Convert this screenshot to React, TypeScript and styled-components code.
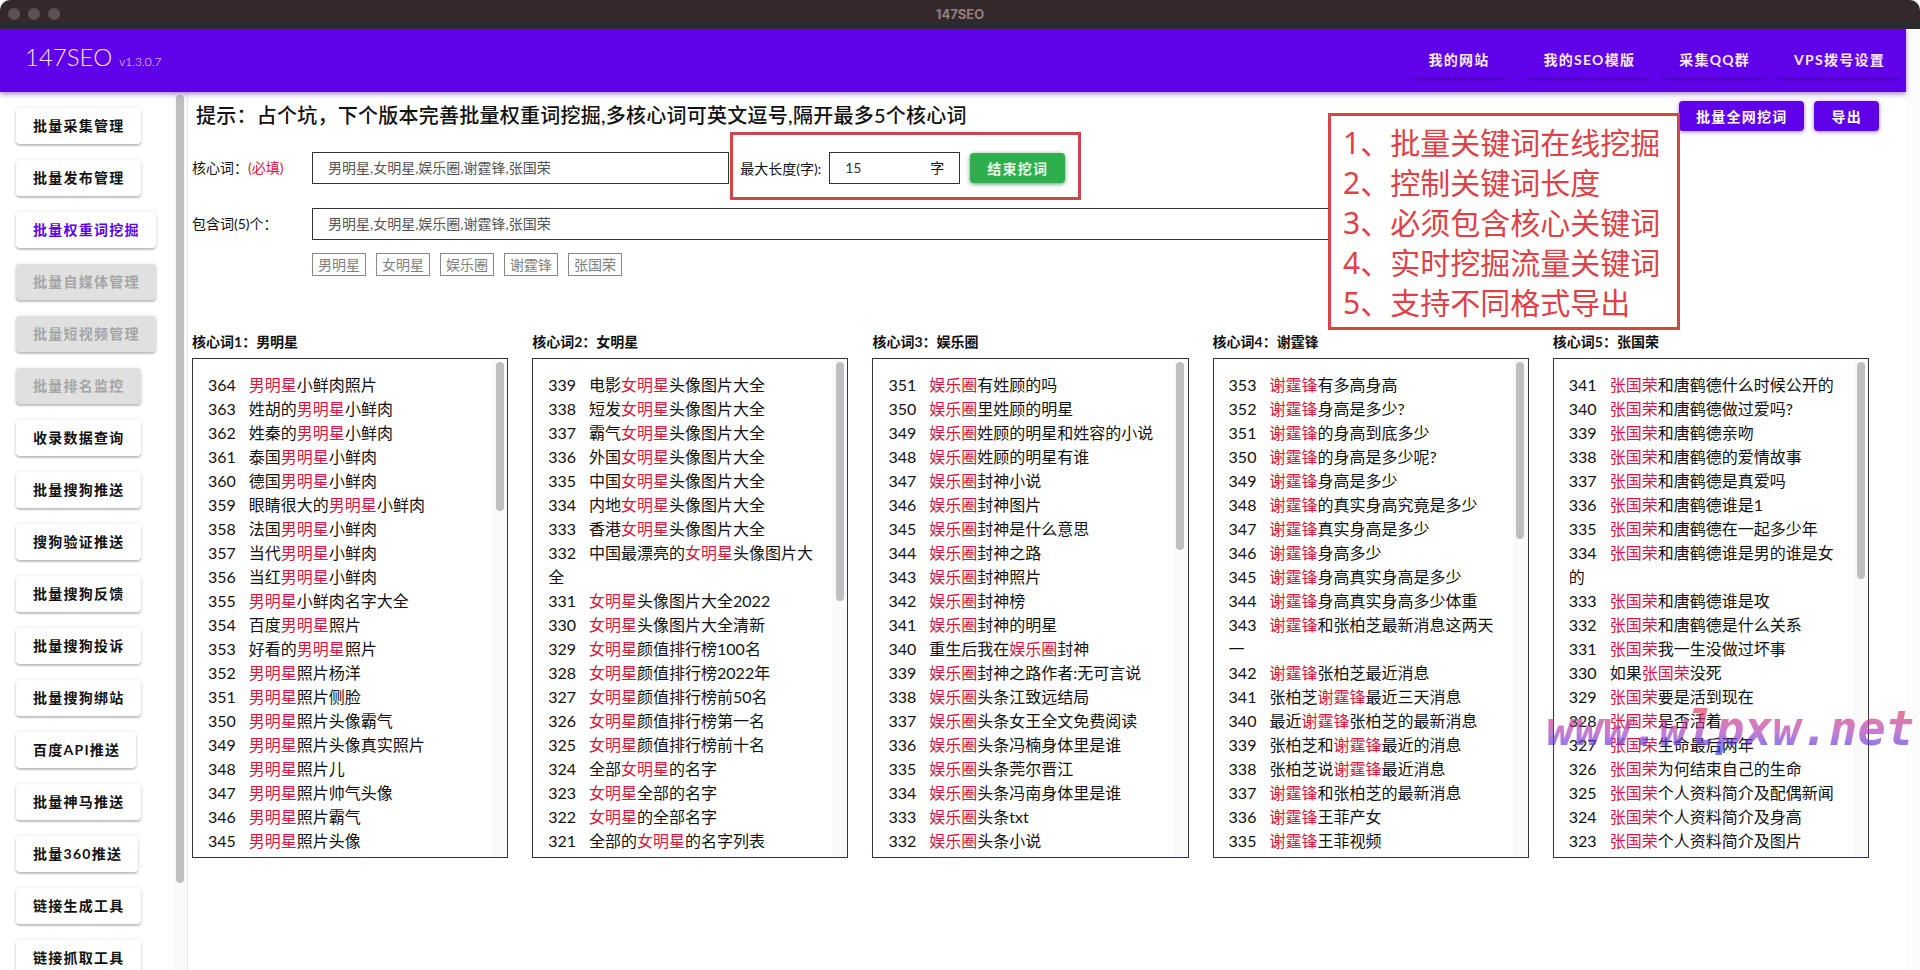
import React from "react";
import styled, { createGlobalStyle, css } from "styled-components";

const sans = `Lato, "Noto Sans CJK SC", sans-serif`;
const purple = "#6002e9";

const GlobalStyle = createGlobalStyle`
  *, *::before, *::after { box-sizing: border-box; }
  body { margin: 0; background: #fff; color: #111; font-family: ${sans}; }
  button, input { font-family: inherit; }
`;

const Window = styled.div`
  position: relative;
  display: flex;
  flex-direction: column;
  height: 100vh;
  overflow: hidden;
`;

const TitleBar = styled.div`
  display: grid;
  grid-template-columns: 1fr auto 1fr;
  align-items: center;
  flex: none;
  height: 29px;
  padding: 0 8px 2px;
  border-radius: 10px 10px 0 0;
  background: linear-gradient(#34282b 0 62%, #2a2b2f 80% 100%);
  color: #8d8080;
  font: bold 13px/16px Inter, sans-serif;
`;

const Lights = styled.div`
  display: flex;
  gap: 8px;
`;

const Light = styled.span`
  width: 12px;
  height: 12px;
  border-radius: 50%;
  background: #5b5150;
`;

const Page = styled.div`
  display: flex;
  flex-direction: column;
  flex: 1;
  min-height: 0;
  margin-right: 14px;
`;

const Gutter = styled.div`
  position: absolute;
  top: 29px;
  right: 0;
  bottom: 0;
  width: 14px;
  background: #fcfcfc;
`;

const Header = styled.header`
  display: flex;
  align-items: center;
  justify-content: space-between;
  flex: none;
  height: 63px;
  padding: 0 4px 2px 25px;
  background: ${purple};
  box-shadow: 0 2px 5px rgba(70, 20, 160, 0.5);
  z-index: 1;
`;

const Brand = styled.h1`
  display: flex;
  align-items: baseline;
  gap: 7px;
  margin: 0;
  color: #ffe0ff;
  font-size: 24px;
  line-height: 32px;
  font-weight: 300;
`;

const Version = styled.small`
  font-size: 12px;
`;

const Nav = styled.nav`
  display: flex;
  gap: 10px;
`;

const NavLink = styled.a<{ $spaced?: boolean }>`
  height: 36px;
  padding: 0 17px;
  margin-right: ${(p) => (p.$spaced ? 10 : 0)}px;
  border-radius: 4px;
  color: #fbe9fb;
  font-size: 14px;
  line-height: 36px;
  font-weight: 700;
  letter-spacing: 0.09em;
  text-decoration: none;
  box-shadow: 0 3px 3px -2px rgba(0, 0, 0, 0.35);
`;

const Body = styled.div`
  display: flex;
  flex: 1;
  min-height: 0;
`;

const Sidebar = styled.aside`
  display: flex;
  flex: none;
  width: 188px;
  border-right: 1px solid #e6e6e6;
`;

const Menu = styled.div`
  display: flex;
  flex: 1;
  flex-direction: column;
  align-items: flex-start;
  gap: 16px;
  padding: 16px 0 0 16px;
  overflow: hidden;
`;

const buttonText = css`
  border: 0;
  border-radius: 4px;
  padding: 0 17px;
  font-size: 14px;
  font-weight: 700;
  letter-spacing: 0.09em;
  white-space: nowrap;
`;

const MenuButton = styled.button<{ $active?: boolean }>`
  ${buttonText}
  flex: none;
  height: 36px;
  padding: 0 16px 2px 17px;
  background: #fff;
  color: ${(p) => (p.$active ? purple : "#111")};
  box-shadow: 0 2px 2px rgba(0, 0, 0, 0.22), 0 0 4px rgba(0, 0, 0, 0.1);

  &:disabled {
    background: #e0e0e0;
    color: #a6a6a6;
  }
`;

const Track = styled.div<{ $width: number }>`
  display: flex;
  flex: none;
  flex-direction: column;
  align-items: center;
  width: ${(p) => p.$width}px;
  padding-top: 3px;
  background: #f9f9f9;
`;

const Thumb = styled.div`
  width: 8px;
  border-radius: 4px;
  background: #bfbfbf;
`;

const Main = styled.main`
  flex: 1;
  min-width: 0;
  padding: 9px 37px 0 4px;
`;

const TopRow = styled.div`
  display: flex;
  align-items: flex-start;
  justify-content: space-between;
  height: 51px;
  margin-right: -10px;
`;

const Hint = styled.h2`
  margin: 0 0 0 4px;
  font-size: 20px;
  line-height: 28px;
  font-weight: 500;
  letter-spacing: 0.0125em;
`;

const Actions = styled.div`
  display: flex;
  gap: 10px;
`;

const ActionButton = styled.button<{ $green?: boolean }>`
  ${buttonText}
  height: 30px;
  background: ${(p) => (p.$green ? "#2fae4e" : purple)};
  color: ${(p) => (p.$green ? "#e9ffe9" : "#fff")};
  box-shadow: 0 1px 4px ${(p) => (p.$green ? "rgba(20, 110, 40, 0.7)" : "rgba(70, 0, 180, 0.5)")};
`;

const FieldRow = styled.div`
  display: flex;
  align-items: center;
  height: 32px;
  margin-bottom: 24px;
  font-size: 14px;
`;

const Label = styled.label`
  flex: none;
  width: 120px;
  padding-bottom: 2px;
`;

const Required = styled.span`
  color: #dc1440;
`;

const TextInput = styled.input<{ $width: string }>`
  width: ${(p) => p.$width};
  height: 32px;
  padding: 0 16px 2px 15px;
  border: 1px solid #333;
  background: #fff;
  color: #555;
  font-size: 14px;
`;

const LimitGroup = styled.div`
  position: relative;
  display: flex;
  align-items: center;
  flex: none;
  height: 32px;
  width: 351px;
  margin-left: 1px;
  padding-left: 10px;

  &::after {
    content: "";
    position: absolute;
    inset: -20px 0 -16px;
    border: 3px solid #d04548;
    pointer-events: none;
  }
`;

const LimitField = styled.div`
  display: flex;
  align-items: center;
  width: 131px;
  height: 32px;
  margin: 0 10px 0 8px;
  padding: 0 15px 2px;
  border: 1px solid #333;
`;

const NumberInput = styled.input`
  flex: 1;
  min-width: 0;
  padding: 0;
  border: 0;
  background: none;
  color: #333;
  font-size: 14px;
`;

const Tags = styled.div`
  display: flex;
  gap: 10px;
  margin: -11px 0 0 120px;
`;

const Tag = styled.span`
  padding: 0 5px;
  border: 1px solid #888;
  color: #808080;
  font-size: 14px;
  line-height: 21px;
`;

const Columns = styled.div`
  display: grid;
  grid-template-columns: repeat(5, minmax(0, 1fr));
  gap: 24px;
  margin-top: 56px;
`;

const ColumnTitle = styled.h3`
  margin: 0 0 6px;
  font-size: 14px;
  line-height: 20px;
  font-weight: 700;
`;

const ListBox = styled.div`
  display: flex;
  height: 500px;
  border: 1px solid #333344;
  overflow: hidden;
`;

const List = styled.ul`
  flex: 1;
  min-width: 0;
  margin: 0;
  padding: 14px 12px 0 15px;
  list-style: none;
  font-size: 16px;
  line-height: 24px;
`;

const Rank = styled.span`
  margin-right: 13px;
`;

const Key = styled.em`
  color: #dc1440;
  font-style: normal;
`;

const Note = styled.ol`
  position: absolute;
  top: 113px;
  right: 240px;
  width: 352px;
  margin: 0;
  padding: 7px 12px 4px;
  border: 3px solid #d84446;
  background: #fff;
  color: #df4146;
  font: 30px/40px "Noto Sans", "Noto Sans CJK SC", sans-serif;
  list-style: none;
  white-space: nowrap;
  z-index: 2;
`;

const Watermark = styled.div`
  position: absolute;
  right: 6px;
  top: 702px;
  background: linear-gradient(#f0304a 10%, #a838b8 55%, #3434f0 90%);
  background-clip: text;
  -webkit-background-clip: text;
  color: transparent;
  opacity: 0.65;
  font: italic bold 47px/54px "DejaVu Sans Mono", monospace;
  z-index: 2;
`;

const navItems = ["我的网站", "我的SEO模版", "采集QQ群", "VPS拨号设置"];

const menuItems: { text: string; active?: boolean; disabled?: boolean }[] = [
  { text: "批量采集管理" },
  { text: "批量发布管理" },
  { text: "批量权重词挖掘", active: true },
  { text: "批量自媒体管理", disabled: true },
  { text: "批量短视频管理", disabled: true },
  { text: "批量排名监控", disabled: true },
  { text: "收录数据查询" },
  { text: "批量搜狗推送" },
  { text: "搜狗验证推送" },
  { text: "批量搜狗反馈" },
  { text: "批量搜狗投诉" },
  { text: "批量搜狗绑站" },
  { text: "百度API推送" },
  { text: "批量神马推送" },
  { text: "批量360推送" },
  { text: "链接生成工具" },
  { text: "链接抓取工具" },
];

// In each phrase "*" stands for the column's core word.
const columns = [
  {
    word: "男明星",
    first: 364,
    thumb: 149,
    phrases: [
      "*小鲜肉照片", "姓胡的*小鲜肉", "姓秦的*小鲜肉", "泰国*小鲜肉", "德国*小鲜肉",
      "眼睛很大的*小鲜肉", "法国*小鲜肉", "当代*小鲜肉", "当红*小鲜肉", "*小鲜肉名字大全",
      "百度*照片", "好看的*照片", "*照片杨洋", "*照片侧脸", "*照片头像霸气",
      "*照片头像真实照片", "*照片儿", "*照片帅气头像", "*照片霸气", "*照片头像",
    ],
  },
  {
    word: "女明星",
    first: 339,
    thumb: 239,
    phrases: [
      "电影*头像图片大全", "短发*头像图片大全", "霸气*头像图片大全", "外国*头像图片大全",
      "中国*头像图片大全", "内地*头像图片大全", "香港*头像图片大全", "中国最漂亮的*头像图片大全",
      "*头像图片大全2022", "*头像图片大全清新", "*颜值排行榜100名", "*颜值排行榜2022年",
      "*颜值排行榜前50名", "*颜值排行榜第一名", "*颜值排行榜前十名", "全部*的名字",
      "*全部的名字", "*的全部名字", "全部的*的名字列表",
    ],
  },
  {
    word: "娱乐圈",
    first: 351,
    thumb: 188,
    phrases: [
      "*有姓顾的吗", "*里姓顾的明星", "*姓顾的明星和姓容的小说", "*姓顾的明星有谁",
      "*封神小说", "*封神图片", "*封神是什么意思", "*封神之路", "*封神照片", "*封神榜",
      "*封神的明星", "重生后我在*封神", "*封神之路作者:无可言说", "*头条江致远结局",
      "*头条女王全文免费阅读", "*头条冯楠身体里是谁", "*头条莞尔晋江", "*头条冯南身体里是谁",
      "*头条txt", "*头条小说",
    ],
  },
  {
    word: "谢霆锋",
    first: 353,
    thumb: 177,
    phrases: [
      "*有多高身高", "*身高是多少?", "*的身高到底多少", "*的身高是多少呢?", "*身高是多少",
      "*的真实身高究竟是多少", "*真实身高是多少", "*身高多少", "*身高真实身高是多少",
      "*身高真实身高多少体重", "*和张柏芝最新消息这两天一", "*张柏芝最近消息",
      "张柏芝*最近三天消息", "最近*张柏芝的最新消息", "张柏芝和*最近的消息",
      "张柏芝说*最近消息", "*和张柏芝的最新消息", "*王菲产女", "*王菲视频",
    ],
  },
  {
    word: "张国荣",
    first: 341,
    thumb: 217,
    phrases: [
      "*和唐鹤德什么时候公开的", "*和唐鹤德做过爱吗?", "*和唐鹤德亲吻", "*和唐鹤德的爱情故事",
      "*和唐鹤德是真爱吗", "*和唐鹤德谁是1", "*和唐鹤德在一起多少年", "*和唐鹤德谁是男的谁是女的",
      "*和唐鹤德谁是攻", "*和唐鹤德是什么关系", "*我一生没做过坏事", "如果*没死",
      "*要是活到现在", "*是否活着", "*生命最后两年", "*为何结束自己的生命",
      "*个人资料简介及配偶新闻", "*个人资料简介及身高", "*个人资料简介及图片",
    ],
  },
];

const notes = [
  "批量关键词在线挖掘",
  "控制关键词长度",
  "必须包含核心关键词",
  "实时挖掘流量关键词",
  "支持不同格式导出",
];

const words = columns.map((c) => c.word);

function ScrollBar({ width, length }: { width: number; length: number | string }) {
  return (
    <Track $width={width}>
      <Thumb style={{ height: length }} />
    </Track>
  );
}

function Phrase({ text, word }: { text: string; word: string }) {
  const [before, after] = text.split("*");
  return (
    <>
      {before}
      <Key>{word}</Key>
      {after}
    </>
  );
}

export default function App() {
  return (
    <Window>
      <GlobalStyle />
      <TitleBar>
        <Lights>
          <Light />
          <Light />
          <Light />
        </Lights>
        <span>147SEO</span>
      </TitleBar>
      <Gutter />
      <Page>
        <Header>
          <Brand>
            147SEO <Version>v1.3.0.7</Version>
          </Brand>
          <Nav>
            {navItems.map((item, i) => (
              <NavLink key={item} href="#" $spaced={i === 0}>
                {item}
              </NavLink>
            ))}
          </Nav>
        </Header>
        <Body>
          <Sidebar>
            <Menu>
              {menuItems.map((item) => (
                <MenuButton key={item.text} $active={item.active} disabled={item.disabled}>
                  {item.text}
                </MenuButton>
              ))}
            </Menu>
            <ScrollBar width={14} length="90%" />
          </Sidebar>
          <Main>
            <TopRow>
              <Hint>提示：占个坑，下个版本完善批量权重词挖掘,多核心词可英文逗号,隔开最多5个核心词</Hint>
              <Actions>
                <ActionButton>批量全网挖词</ActionButton>
                <ActionButton>导出</ActionButton>
              </Actions>
            </TopRow>
            <FieldRow>
              <Label htmlFor="core">
                核心词：<Required>(必填)</Required>
              </Label>
              <TextInput id="core" $width="calc(25% - 2px)" defaultValue={words.join(",")} />
              <LimitGroup>
                <label htmlFor="limit">最大长度(字):</label>
                <LimitField>
                  <NumberInput id="limit" defaultValue="15" />
                  字
                </LimitField>
                <ActionButton $green>结束挖词</ActionButton>
              </LimitGroup>
            </FieldRow>
            <FieldRow>
              <Label htmlFor="include">包含词(5)个：</Label>
              <TextInput id="include" $width="80%" defaultValue={words.join(",")} />
            </FieldRow>
            <Tags>
              {words.map((word) => (
                <Tag key={word}>{word}</Tag>
              ))}
            </Tags>
            <Columns>
              {columns.map((column, i) => (
                <section key={column.word}>
                  <ColumnTitle>
                    核心词{i + 1}：{column.word}
                  </ColumnTitle>
                  <ListBox>
                    <List>
                      {column.phrases.map((text, n) => (
                        <li key={text}>
                          <Rank>{column.first - n}</Rank>
                          <Phrase text={text} word={column.word} />
                        </li>
                      ))}
                    </List>
                    <ScrollBar width={15} length={column.thumb} />
                  </ListBox>
                </section>
              ))}
            </Columns>
          </Main>
        </Body>
      </Page>
      <Note>
        {notes.map((text, i) => (
          <li key={text}>
            {i + 1}、{text}
          </li>
        ))}
      </Note>
      <Watermark>www.wlpxw.net</Watermark>
    </Window>
  );
}
